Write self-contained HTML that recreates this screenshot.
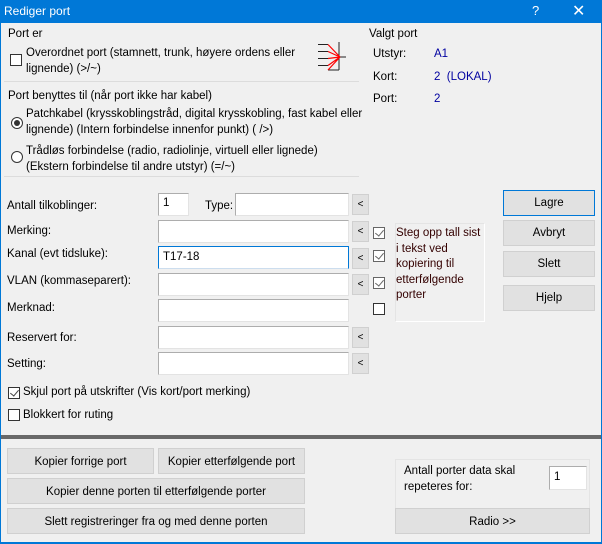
<html><head><style>
*{box-sizing:border-box}
body{margin:0;width:602px;height:544px;background:#f0f0f0;font-family:"Liberation Sans",sans-serif;font-size:11.5px;color:#000;position:relative;overflow:hidden}
.a{position:absolute;white-space:nowrap}
.in{position:absolute;background:#fff;border:1px solid #adadad;border-right-color:#e3e3e3;border-bottom-color:#e3e3e3;}
.lt{position:absolute;width:17px;height:21px;background:#e1e1e1;border:1px solid #d0d0d0;font-size:10px;text-align:center;line-height:19px}
.btn{position:absolute;background:#e1e1e1;border:1px solid #d0d0d0;text-align:center;font-size:11.5px}
.cb{position:absolute;width:12px;height:12px;border:1px solid #333;background:#fff}
.cb.c::after{content:"";position:absolute;left:3px;top:0px;width:4px;height:7px;border:solid #444;border-width:0 1px 1px 0;transform:rotate(40deg)}
.cb.g{border-color:#666}
.cb.g::after{border-color:#666}
</style></head><body>
<div class="a" style="left:0;top:0;width:602px;height:23px;background:#0078d7"></div>
<div class="a" style="left:4px;top:4px;color:#fff;font-size:12px">Rediger port</div>
<div class="a" style="left:532px;top:3px;color:#fff;font-size:13px">?</div>
<div class="a" style="left:572px;top:1px;color:#fff;font-size:16px">✕</div>
<div class="a" style="left:0;top:23px;width:1px;height:521px;background:#0078d7"></div>
<div class="a" style="left:601px;top:23px;width:1px;height:521px;background:#0078d7"></div>
<div class="a" style="left:0;top:542px;width:602px;height:2px;background:#0078d7"></div>

<div class="a" style="left:4px;top:30px;width:355px;height:52px;border-bottom:1px solid #dcdcdc"></div>
<div class="a" style="left:8px;top:28px">Port er</div>
<div class="cb" style="left:10px;top:54px"></div>
<div class="a" style="left:26px;top:45px;line-height:16px">Overordnet port (stamnett, trunk, høyere ordens eller<br>lignende) (&gt;/~)</div>
<svg class="a" style="left:316px;top:40px" width="34" height="32"><g stroke="#222" stroke-width="1" fill="none"><path d="M2 4.5H12M2 11.5H12M2 18.5H12M2 25.5H12M23 2V30M23 17H30M12 30H23"/></g><g stroke="#f00" stroke-width="1.2" fill="none"><path d="M12 4.5L24 17M12 11.5L24 17M12 18.5L24 17M12 25.5L24 17M12 30L24 17"/></g></svg>
<div class="a" style="left:8px;top:90px">Port benyttes til (når port ikke har kabel)</div>
<div class="a" style="left:11px;top:117px;width:12px;height:12px;border:1px solid #333;border-radius:50%;background:#fff"><div style="position:absolute;left:2px;top:2px;width:6px;height:6px;border-radius:50%;background:#333"></div></div>
<div class="a" style="left:26px;top:106px;line-height:16px">Patchkabel (krysskoblingstråd, digital krysskobling, fast kabel eller<br>lignende) (Intern forbindelse innenfor punkt) ( /&gt;)</div>
<div class="a" style="left:11px;top:151px;width:12px;height:12px;border:1px solid #333;border-radius:50%;background:#fff"></div>
<div class="a" style="left:26px;top:143px;line-height:16px">Trådløs forbindelse (radio, radiolinje, virtuell eller lignede)<br>(Ekstern forbindelse til andre utstyr) (=/~)</div>
<div class="a" style="left:4px;top:176px;width:355px;height:1px;background:#dcdcdc"></div>

<div class="a" style="left:369px;top:28px">Valgt port</div>
<div class="a" style="left:373px;top:48px">Utstyr:</div><div class="a" style="left:434px;top:48px;color:#0000a0">A1</div>
<div class="a" style="left:373px;top:71px">Kort:</div><div class="a" style="left:434px;top:71px;color:#0000a0">2&nbsp; (LOKAL)</div>
<div class="a" style="left:373px;top:93px">Port:</div><div class="a" style="left:434px;top:93px;color:#0000a0">2</div>

<div class="a" style="left:7px;top:200px">Antall tilkoblinger:</div>
<div class="in" style="left:158px;top:193px;width:31px;height:23px"><span style="position:absolute;left:4px;top:3px">1</span></div>
<div class="a" style="left:205px;top:200px">Type:</div>
<div class="in" style="left:235px;top:193px;width:114px;height:23px"></div>
<div class="lt" style="left:352px;top:194px">&lt;</div>
<div class="a" style="left:7px;top:225px">Merking:</div>
<div class="in" style="left:158px;top:220px;width:191px;height:23px"></div>
<div class="lt" style="left:352px;top:221px">&lt;</div>
<div class="a" style="left:7px;top:248px">Kanal (evt tidsluke):</div>
<div class="in" style="left:158px;top:246px;width:191px;height:23px;border:1px solid #0078d7;border-bottom-color:#cde;border-right-color:#0078d7"><span style="position:absolute;left:4px;top:4px">T17-18</span></div>
<div class="lt" style="left:352px;top:248px">&lt;</div>
<div class="a" style="left:7px;top:275px">VLAN (kommaseparert):</div>
<div class="in" style="left:158px;top:273px;width:191px;height:23px"></div>
<div class="lt" style="left:352px;top:274px">&lt;</div>
<div class="a" style="left:7px;top:302px">Merknad:</div>
<div class="in" style="left:158px;top:299px;width:191px;height:23px"></div>
<div class="a" style="left:7px;top:332px">Reservert for:</div>
<div class="in" style="left:158px;top:326px;width:191px;height:23px"></div>
<div class="lt" style="left:352px;top:327px">&lt;</div>
<div class="a" style="left:7px;top:358px">Setting:</div>
<div class="in" style="left:158px;top:352px;width:191px;height:23px"></div>
<div class="lt" style="left:352px;top:353px">&lt;</div>

<div class="cb c g" style="left:373px;top:227px"></div>
<div class="cb c g" style="left:373px;top:250px"></div>
<div class="cb c g" style="left:373px;top:277px"></div>
<div class="cb" style="left:373px;top:303px"></div>
<div class="a" style="left:395px;top:223px;width:90px;height:99px;border:1px solid #e4e4e4;border-right-color:#fff;border-bottom-color:#fff"></div>
<div class="a" style="left:396px;top:226px;line-height:15.5px;color:#300">Steg opp tall sist<br>i tekst ved<br>kopiering til<br>etterfølgende<br>porter</div>

<div class="btn" style="left:503px;top:190px;width:92px;height:26px;line-height:24px;border-color:#0078d7">Lagre</div>
<div class="btn" style="left:503px;top:220px;width:92px;height:26px;line-height:24px">Avbryt</div>
<div class="btn" style="left:503px;top:251px;width:92px;height:26px;line-height:24px">Slett</div>
<div class="btn" style="left:503px;top:285px;width:92px;height:26px;line-height:24px">Hjelp</div>

<div class="cb c" style="left:8px;top:387px"></div>
<div class="a" style="left:23px;top:386px">Skjul port på utskrifter (Vis kort/port merking)</div>
<div class="cb" style="left:8px;top:409px"></div>
<div class="a" style="left:23px;top:409px">Blokkert for ruting</div>

<div class="a" style="left:1px;top:435px;width:600px;height:4px;background:#696969"></div>

<div class="btn" style="left:7px;top:448px;width:147px;height:26px;line-height:26px">Kopier forrige port</div>
<div class="btn" style="left:158px;top:448px;width:147px;height:26px;line-height:26px">Kopier etterfølgende port</div>
<div class="btn" style="left:7px;top:478px;width:298px;height:26px;line-height:26px">Kopier denne porten til etterfølgende porter</div>
<div class="btn" style="left:7px;top:508px;width:298px;height:26px;line-height:26px">Slett registreringer fra og med denne porten</div>
<div class="a" style="left:395px;top:459px;width:195px;height:56px;border:1px solid #e4e4e4"></div>
<div class="a" style="left:404px;top:463px;line-height:16px">Antall porter data skal<br>repeteres for:</div>
<div class="in" style="left:549px;top:466px;width:38px;height:24px"><span style="position:absolute;left:4px;top:4px">1</span></div>
<div class="btn" style="left:395px;top:508px;width:195px;height:26px;line-height:26px">Radio &gt;&gt;</div>
</body></html>
